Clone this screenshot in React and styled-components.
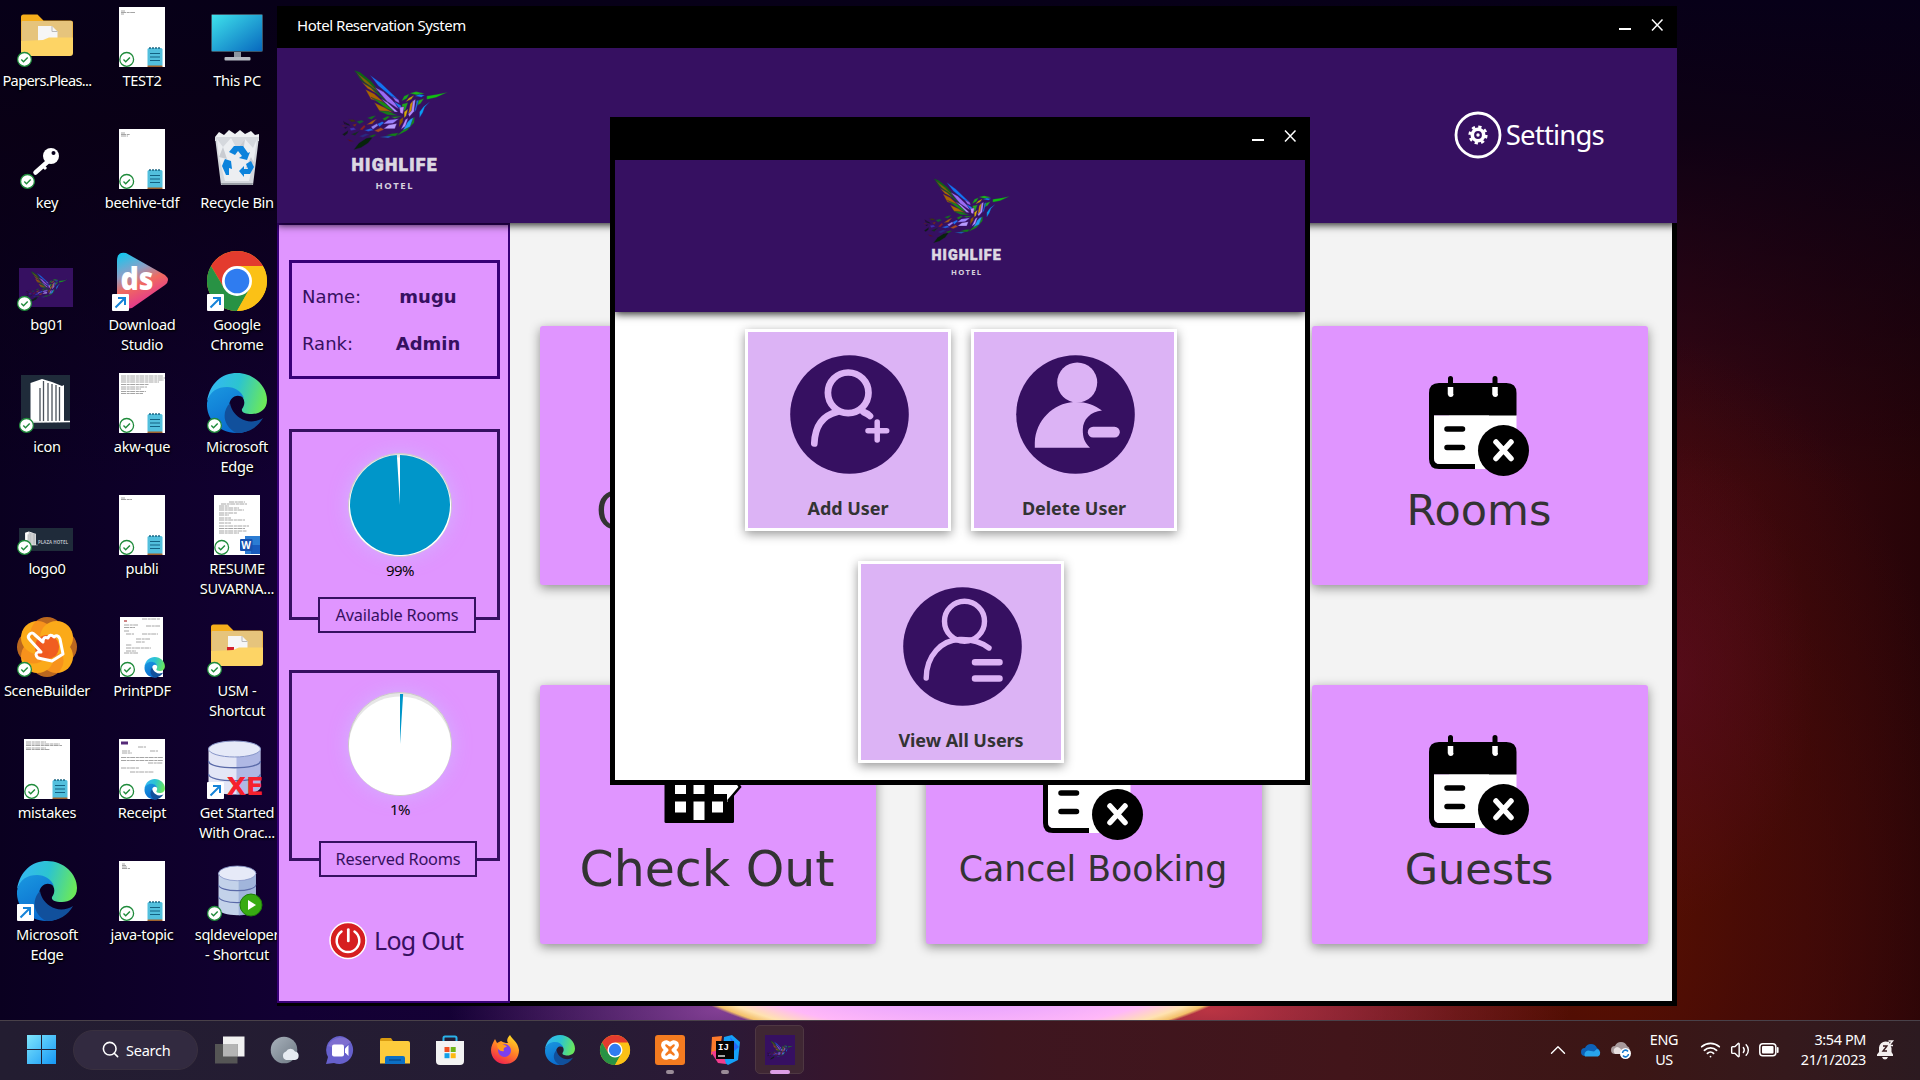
import React from "react";
import styled, { createGlobalStyle, css } from "styled-components";
import { Search, Wifi, Volume2, ChevronUp } from "lucide-react";

const UI = `"Noto Sans", "Open Sans", sans-serif`;
const VERDANA = `"DejaVu Sans", Verdana, sans-serif`;
const PURPLE = "#361061";
const PINK = "#e095ff";

const GlobalStyle = createGlobalStyle`
  * { box-sizing: border-box; }
  html, body { margin: 0; padding: 0; background: #06001a; overflow: hidden; }
  svg { display: block; overflow: visible; flex: none; }
`;

/* ---------- desktop ---------- */

const Desktop = styled.div`
  position: relative;
  width: 1920px;
  height: 1080px;
  overflow: hidden;
  display: flex;
  flex-direction: column;
  justify-content: space-between;
  font-family: ${UI};
  color: #fff;
  background:
    radial-gradient(ellipse 316px 115px at 961px 935px, #ffd9ff 0, #e8a4ff 60%, #ffb8f8 84%, #ffe2b0 94%, #f3c069 98.5%, transparent 100.5%),
    radial-gradient(ellipse 270px 100px at 720px 1010px, rgba(166, 84, 180, 0.75), transparent),
    radial-gradient(ellipse 360px 110px at 1210px 1010px, rgba(210, 60, 70, 0.85), transparent),
    radial-gradient(ellipse 150px 240px at 1665px 680px, rgba(100, 12, 44, 0.5), transparent),
    radial-gradient(ellipse 380px 600px at 1600px 920px, #5a1000 0, rgba(74, 12, 4, 0.85) 40%, transparent),
    linear-gradient(to bottom, #070018 0, rgba(9, 0, 20, 0.9) 12%, transparent 45%),
    linear-gradient(to right, #0a0020 0, #120033 15%, #180238 35%, #3a0a30 70%, #3f0812 88%, #270408 100%);
`;

const IconGrid = styled.div`
  display: grid;
  grid-template-columns: repeat(3, 95px);
  grid-auto-rows: 122px;
  width: 285px;
  padding-top: 7px;
`;

const Shortcut = styled.div`
  display: flex;
  flex-direction: column;
  align-items: center;
  gap: 3px;
  width: 94px;
`;

const ShortcutLabel = styled.span`
  font-size: 14.6px;
  line-height: 20px;
  letter-spacing: ${(p) => p.$track || "-0.3px"};
  text-align: center;
  white-space: pre;
  text-shadow: 0 1px 2px #000, 1px 1px 2px #000;
`;

const Check = ({ x = 7.5, y = 52.4 }) => (
  <g>
    <circle cx={x} cy={y} r="6.9" fill="#fff" stroke="#1f8b3b" strokeWidth="1.3" />
    <path d={`M${x - 3.2} ${y + 0.2} l2.2 2.2 l4.2 -4.4`} fill="none" stroke="#1f8b3b" strokeWidth="1.4" />
  </g>
);

const Arrow = () => (
  <g>
    <rect x="0" y="43" width="17" height="17" rx="1" fill="#fff" />
    <path d="M3.5 56.5 L12.5 47.5 M6 47 H13 V54" fill="none" stroke="#1583d8" strokeWidth="2" />
  </g>
);

const Notepad = () => (
  <g>
    <rect x="35.5" y="41" width="15" height="18" rx="1.5" fill="#52bfdd" />
    <path d="M38 40v2M41 40v2M44 40v2M47 40v2" stroke="#14607e" strokeWidth="1.4" />
    <path d="M38 46.5h10M38 50h10M38 53.5h10" stroke="#136182" strokeWidth="1.2" />
    <rect x="35.5" y="58.5" width="15" height="1.5" fill="#a0622c" />
  </g>
);

const EdgeShape = ({ id }) => (
  <g>
    <defs>
      <linearGradient id={`${id}a`} x1="0" y1="0.3" x2="1" y2="0.5">
        <stop offset="0" stopColor="#35b7f6" />
        <stop offset="0.5" stopColor="#2cc4d0" />
        <stop offset="1" stopColor="#6be85a" />
      </linearGradient>
      <linearGradient id={`${id}b`} x1="0" y1="0" x2="0.5" y2="1">
        <stop offset="0" stopColor="#1a98e0" />
        <stop offset="1" stopColor="#0a6ccf" />
      </linearGradient>
    </defs>
    <path d="M0 28 C3 10 15 0 30 0 C47 0 60 13 60 27 C60 37 52 41 45 41 C38 41 34 39 35 36 C39 31 38 24 31 20 C22 12 7 15 0 28Z" fill={`url(#${id}a)`} />
    <path d="M0 30 C2 18 11 14 20 14 C28 14 34 18 37 25 C30 20 22 24 22 34 C22 47 32 55 42 57 C37 60 32 60 29 60 C12 60 -1 46 0 30Z" fill={`url(#${id}b)`} />
    <path d="M23 30 C15 38 15 52 29 60 C42 60 51 54 56 45 C50 49 40 50 33 45 C27 41 24 36 23 30Z" fill="#11509c" />
  </g>
);

const ChromeShape = () => (
  <g>
    <circle cx="30" cy="30" r="30" fill="#fbc116" />
    <path d="M30 30 L56 15 A30 30 0 0 0 4 15 L17 37Z" fill="#e33b2e" />
    <path d="M4 15 A30 30 0 0 0 30 60 L43 37 L30 30 L17 37Z" fill="#289244" />
    <path d="M30 15 H56 A30 30 0 0 1 30 60 L43 37Z" fill="#fbc116" />
    <circle cx="30" cy="30" r="15" fill="#fff" />
    <circle cx="30" cy="30" r="12.3" fill="#2f7cf0" />
  </g>
);

const FEATHERS = [
  ["250,208 268,214 300,240 338,285 300,258 270,238", "#0b6b10"],
  ["256,214 290,240 325,275 280,243", "#7a6a00"],
  ["297,222 330,246 384,296 376,298 322,254", "#1274f2"],
  ["268,240 300,256 345,296 362,312 312,274", "#0f7a10"],
  ["272,243 300,260 318,278 290,262", "#b06a00"],
  ["312,258 338,272 374,306 384,324 348,300", "#9a6cf4"],
  ["283,264 310,278 345,308 300,294", "#a86400"],
  ["300,288 340,304 380,334 350,324", "#178a12"],
  ["330,292 350,304 382,332 372,332", "#b38cff"],
  ["310,304 340,318 368,334 326,330", "#a86a00"],
  ["322,328 352,330 382,342 350,341", "#157d18"],
  ["364,286 384,296 386,306 374,300", "#9a6cf4"],
  ["368,300 390,312 400,330 386,322", "#1b7cf2"],
  ["392,300 400,284 416,278 408,292", "#18a818"],
  ["404,302 414,290 430,282 422,294", "#c9a000"],
  ["416,276 436,271 462,277 440,282", "#18b818"],
  ["432,284 446,279 462,282 452,288", "#1280f0"],
  ["468,284 500,279 531,273 496,289 468,295", "#10c010"],
  ["478,301 458,316 446,332 446,350 456,334 462,318", "#0a9cf4"],
  ["434,300 460,292 450,306 438,314", "#22aa22"],
  ["424,300 434,294 430,330 416,346 412,338", "#b08cff"],
  ["418,308 427,298 422,328 413,338", "#d09000"],
  ["438,298 444,296 436,326 430,334", "#1474f0"],
  ["394,308 412,304 404,326 392,330", "#1fa81c"],
  ["386,318 400,316 396,338 388,334", "#c08cff"],
  ["400,332 412,322 406,344 400,350", "#d8b000"],
  ["432,346 430,364 408,388 376,404 398,384 412,362", "#158c18"],
  ["410,362 420,352 428,348 418,376 396,386", "#22a0f4"],
  ["404,354 412,350 404,374 390,384", "#b38cff"],
  ["386,356 398,346 396,362 384,378", "#8a5800"],
  ["360,346 394,344 372,352", "#208820"],
  ["336,368 352,356 384,352 366,366", "#9a80ff"],
  ["338,382 354,370 378,366 372,382", "#b89cff"],
  ["334,352 350,344 358,346 342,358", "#168218"],
  ["318,368 334,360 340,364 326,376", "#2070f0"],
  ["300,376 318,366 322,372 306,384", "#9080f0"],
  ["288,350 304,344 316,342 302,354", "#137020"],
  ["286,370 304,358 318,352 304,368", "#a85a10"],
  ["310,388 330,378 340,384 322,392", "#a84a20"],
  ["266,384 280,370 284,376 274,386", "#8a2020"],
  ["280,386 300,380 308,386 292,390", "#2060e0"],
  ["232,354 248,354 256,360 242,362", "#3a3410"],
  ["256,360 272,356 280,360 266,368", "#136030"],
  ["216,358 224,364 228,370 220,368", "#180c14"],
  ["210,372 226,372 218,376", "#602020"],
  ["220,362 234,368 238,374 226,370", "#101a18"],
  ["218,378 230,376 224,382", "#181020"],
  ["244,370 258,366 252,376", "#7a3010"],
  ["236,380 248,378 256,384 240,388", "#4030b0"],
  ["214,398 232,386 230,396 220,403", "#101c18"],
  ["240,398 256,392 266,388 252,402", "#12301c"],
  ["228,412 240,416 250,420 236,419", "#601010"],
  ["264,404 284,396 296,398 276,408", "#2a2a80"],
  ["248,444 264,424 286,410 306,406 292,424 270,438", "#06240a"],
  ["326,406 344,404 370,402 352,409", "#1870c0"],
  ["344,402 364,396 384,394 374,404", "#128018"],
  ["292,404 310,398 318,400 304,408", "#16601a"],
];

const Bird = (props) => (
  <svg viewBox="210 207 322 238" {...props}>
    {FEATHERS.map(([points, fill], i) => (
      <polygon key={i} points={points} fill={fill} stroke={PURPLE} strokeWidth="1.4" strokeOpacity="0.8" />
    ))}
  </svg>
);

const NestedBird = ({ x, y, width, height }) => (
  <Bird x={x} y={y} width={width} height={height} opacity="0.8" />
);

const Folder = ({ red }) => (
  <g>
    <path d="M4 10 q0 -2.5 2.5 -2.5 h14 l6 6 h27 q2.500 0 2.500 2.500 v30 h-52Z" fill="#f6ae1c" />
    <rect x="4.500" y="14" width="51" height="30" rx="1" fill="#e6c47c" />
    <path d="M21 34 V19 h14 l5.500 5.500 V34Z" fill="#f6f6f6" />
    <path d="M35 19 v5.500 h5.500" fill="none" stroke="#b9b9b9" />
    {red && <rect x="20" y="30" width="7" height="4" fill="#d21f2b" />}
    <path d="M4 34 L26 33 L32 30.500 H56 V46 q0 3 -3 3 H7 q-3 0 -3 -3Z" fill="#fdd465" />
  </g>
);

const Doc = ({ lines = [], badge = "note", id, narrow }) => (
  <g>
    <rect x={narrow ? 8 : 7} y="0" width={narrow ? 43 : 46} height="60" fill="#fff" />
    {lines.map(([x, y, w], i) => (
      <path key={i} d={`M${x} ${y}h${w}`} stroke="#888" strokeWidth="1" strokeDasharray="5 0.7 3 0.5" opacity="0.75" />
    ))}
    {badge === "note" && <Notepad />}
    {badge === "edge" && (
      <g transform="translate(32.500,40) scale(0.34)">
        <EdgeShape id={id} />
      </g>
    )}
    <Check x={narrow ? 15.5 : 14.7} />
  </g>
);

const Tower = ({ transform }) => (
  <g transform={transform}>
    <path d="M6.500 7 L18 3 L28 6 L38 10 L40 9 V45 L46 45.500 H6.500Z" fill="#fff" />
    <path d="M16 12v35M19.500 5v42M24 7v40M28 8v39M32 9v38M35.500 11v36" stroke="#4b525b" strokeWidth="1.300" />
    <path d="M5 46 L46 45.500" stroke="#fff" strokeWidth="1.500" />
  </g>
);

const Cylinder = ({ c1, c2 }) => (
  <g>
    <path d="M0 8 V46 C0 56 52 56 52 46 V8Z" fill={c1} />
    <path d="M28 8 V54 C42 53 52 50 52 46 V8Z" fill={c2} opacity="0.6" />
    <path d="M0 20 C0 29 52 29 52 20 M0 33 C0 42 52 42 52 33" fill="none" stroke="#5a6aa8" strokeWidth="1.300" />
    <ellipse cx="26" cy="8" rx="26" ry="8" fill="#e6eaf8" stroke="#8795c8" />
  </g>
);

const ART = {
  folder: <g><Folder /><Check /></g>,
  folderRed: <g><Folder red /><Check /></g>,
  pc: (
    <g>
      <defs>
        <linearGradient id="pc" x1="0" y1="0" x2="1" y2="1">
          <stop offset="0" stopColor="#3fe3ec" />
          <stop offset="1" stopColor="#0767be" />
        </linearGradient>
      </defs>
      <rect x="4.500" y="7.500" width="51" height="37" rx="1" fill="url(#pc)" stroke="#3c5568" />
      <path d="M27 45h7v6h-7z" fill="#8d95a0" />
      <rect x="17.500" y="50" width="26" height="3.500" rx="1" fill="#b5bac3" />
    </g>
  ),
  key: (
    <g>
      <path d="M36 28 L18.500 43.500" stroke="#fff" strokeWidth="4.500" strokeLinecap="round" />
      <path d="M26 37 l3 3" stroke="#fff" strokeWidth="3" />
      <circle cx="34" cy="27" r="8" fill="#fff" />
      <circle cx="36.500" cy="24" r="2" fill="#08001c" />
      <Check x={10.5} />
    </g>
  ),
  bin: (
    <g>
      <path d="M8 8 L12 3 L17 6 L22 1 L28 5 L33 1 L38 5 L44 2 L48 6 L52 5 L52 12 H8Z" fill="#eef0f2" />
      <path d="M8 8 H52 L46 56 H14Z" fill="#d5d8dd" />
      <path d="M10 10 L16 18 L24 9 L30 20 L38 10 L46 19 L50 10 L47 30 L42 52 H18 L12 28Z" fill="#eceef1" />
      <path d="M16 18 L12 28 L20 30Z M30 20 L36 24 L38 10Z M44 28 L38 40 L47 34Z" fill="#c9ccd2" />
      <path d="M27 17h9l5 7 2-1-3 8-8-2 3-2-4-5-3 4-6-3Z M18 30l6 2 1 8-3-1v7h-3l-4-9 2-5Z M44 32l3 6-4 7h-6v3l-5-6 5-5v3h4l-2-5Z" fill="#0c83dc" />
      <path d="M14 54 H46 L45.500 56 H14.500Z" fill="#999da4" />
    </g>
  ),
  bg01: (
    <g>
      <rect x="2" y="17" width="54" height="39" fill={PURPLE} />
      <NestedBird x={8} y={20} width={43} height={31} />
      <Check />
    </g>
  ),
  ds: (
    <g>
      <defs>
        <linearGradient id="ds" x1="0.1" y1="0" x2="0.5" y2="1">
          <stop offset="0" stopColor="#12c8f0" />
          <stop offset="0.35" stopColor="#8aa0c8" />
          <stop offset="0.6" stopColor="#f06a60" />
          <stop offset="1" stopColor="#e22e96" />
        </linearGradient>
      </defs>
      <path d="M5 10 q0 -10 9 -8 L53 24 q6 5 0 10 L20 57 Q5 60 5 48Z" fill="url(#ds)" />
      <text x="8.5" y="39" fontSize="31" fontWeight="800" fontFamily="Open Sans, sans-serif" fill="#fff" textLength="33" lengthAdjust="spacingAndGlyphs">ds</text>
      <Arrow />
    </g>
  ),
  chrome: <g><ChromeShape /><Arrow /></g>,
  tower: (
    <g>
      <rect x="4" y="2" width="49" height="54" fill="#1f2b3a" />
      <Tower transform="translate(7,3)" />
      <Check x={9.5} />
    </g>
  ),
  edgeCheck: <g><EdgeShape id="e1" /><Check /></g>,
  edgeArrow: <g><EdgeShape id="e2" /><Arrow /></g>,
  plaza: (
    <g>
      <rect x="2" y="33" width="54" height="23" fill="#1f2b3a" />
      <Tower transform="translate(6,35.500) scale(0.320)" />
      <text x="21" y="49" fontSize="5.500" fontFamily="Open Sans, sans-serif" fontWeight="700" fill="#b4b9c0" textLength="30" lengthAdjust="spacingAndGlyphs">PLAZA HOTEL</text>
      <Check />
    </g>
  ),
  scene: (
    <g>
      {[0, 45, 90, 135, 180, 225, 270, 315].map((a) => (
        <circle key={a} cx={30 + 13.500 * Math.cos((a * Math.PI) / 180)} cy={30 + 13.500 * Math.sin((a * Math.PI) / 180)} r="16.500" fill={a % 90 ? "#fbaa19" : "#f68a1e"} opacity={a % 90 ? 1 : 0.75} />
      ))}
      <circle cx="30" cy="30" r="12" fill="#ee4a23" opacity="0.8" />
      <path d="M12 18 q3 -4 6 0 l8 7 q0 -6 5 -4 q2 -5 6 -1 q4 -3 6 2 l3 15 l-11 7 l-14 -3 q-4 -4 0 -6 h3 l-11 -12 q-3 -3 -1 -5Z" fill="none" stroke="#fff" strokeWidth="3" strokeLinejoin="round" />
      <Check />
    </g>
  ),
  xe: (
    <g>
      <g transform="translate(1.500,2)"><Cylinder c1="#e3e6f6" c2="#8c9ad8" /></g>
      <text x="19.500" y="56" fontSize="25" fontFamily="DejaVu Sans, sans-serif" fontWeight="700" fill="#f5212d" textLength="37" lengthAdjust="spacingAndGlyphs">XE</text>
      <Arrow />
    </g>
  ),
  sql: (
    <g>
      <g transform="translate(11.500,5) scale(0.72,0.920)"><Cylinder c1="#c3d2ea" c2="#8aa2d0" /></g>
      <circle cx="44" cy="44" r="11" fill="#37ab12" stroke="#1f7d0a" />
      <path d="M41 39 l8 5 l-8 5Z" fill="#fff" />
      <Check />
    </g>
  ),
  test2: <Doc lines={[[9, 4, 4], [9, 5.500, 14], [9, 7, 3]]} />,
  beehive: <Doc lines={[[9, 4, 4], [9, 5.500, 9], [9, 7, 7]]} />,
  akw: <Doc lines={[[9, 3, 42], [9, 5, 44], [9, 7, 43], [9, 9, 38], [9, 11.500, 28], [9, 14, 26], [9, 16, 20], [9, 18.500, 25], [9, 20.500, 22]]} />,
  publi: <Doc lines={[[9, 3, 4], [9, 4.500, 11]]} />,
  resume: (
    <g>
      <Doc badge="none" lines={[[22, 7, 16], [14, 9, 26], [12, 11, 10], [12, 13, 20], [12, 15, 25], [12, 18, 18], [12, 20, 10], [12, 23, 12], [12, 25, 26], [12, 28, 12], [12, 31, 30], [12, 33.500, 26], [12, 36, 28], [12, 38, 20]]} />
      <rect x="38" y="41" width="15" height="18" fill="#2b7cd3" />
      <rect x="44" y="50" width="9" height="9" fill="#185abd" />
      <rect x="33" y="44" width="12.500" height="12" rx="1" fill="#1751ae" />
      <text x="39.200" y="53.600" fontSize="10" fontWeight="700" textAnchor="middle" fontFamily="Open Sans, sans-serif" fill="#fff">W</text>
    </g>
  ),
  print: (
    <g>
      <Doc narrow badge="edge" id="e3" lines={[[12, 4, 3], [30, 2, 18], [12, 8, 14], [12, 10.500, 11], [12, 14, 5], [34, 9, 14], [30, 17, 16], [14, 17, 8], [24, 22, 14], [24, 25, 9], [14, 28, 6], [14, 31, 25], [14, 34, 10], [12, 36, 14]]} />
      <path d="M12 4h3" stroke="#c33" />
    </g>
  ),
  mistakes: <Doc lines={[[9, 3, 20], [9, 5, 34], [9, 6.500, 36], [9, 9, 20], [9, 10.500, 24]]} />,
  receipt: (
    <g>
      <Doc badge="edge" id="e4" lines={[[26, 8, 8], [10, 12, 8], [10, 14, 10], [38, 12, 8], [9, 18.500, 42], [9, 21.500, 42], [36, 24, 15], [9, 29, 18], [18, 33, 24]]} />
      <path d="M9 4h7" stroke="#552a78" strokeWidth="3" />
    </g>
  ),
  java: <Doc lines={[[10, 3, 3], [10, 4.500, 4], [10, 6, 5], [10, 7.500, 8]]} />,
};

const SHORTCUTS = [
  ["folder", "Papers.Pleas...", "-0.65px"], ["test2", "TEST2"], ["pc", "This PC"],
  ["key", "key"], ["beehive", "beehive-tdf"], ["bin", "Recycle Bin"],
  ["bg01", "bg01"], ["ds", "Download\nStudio"], ["chrome", "Google\nChrome"],
  ["tower", "icon"], ["akw", "akw-que"], ["edgeCheck", "Microsoft\nEdge"],
  ["plaza", "logo0"], ["publi", "publi"], ["resume", "RESUME\nSUVARNA..."],
  ["scene", "SceneBuilder"], ["print", "PrintPDF"], ["folderRed", "USM -\nShortcut"],
  ["mistakes", "mistakes"], ["receipt", "Receipt"], ["xe", "Get Started\nWith Orac..."],
  ["edgeArrow", "Microsoft\nEdge"], ["java", "java-topic"], ["sql", "sqldeveloper\n- Shortcut"],
];

/* ---------- windows ---------- */

const Window = styled.section`
  position: absolute;
  isolation: isolate;
  left: ${(p) => p.$x}px;
  top: ${(p) => p.$y}px;
  width: ${(p) => p.$w}px;
  height: ${(p) => p.$h}px;
  display: flex;
  flex-direction: column;
  background: #000;
`;

const TitleBar = styled.header`
  display: flex;
  align-items: center;
  flex: none;
  height: ${(p) => p.$h}px;
  padding: 0 13px 5px 20px;
  gap: 19px;
`;

const Title = styled.h1`
  margin: 0 auto 0 0;
  font-size: 15px;
  font-weight: 400;
  letter-spacing: -0.47px;
  line-height: 20px;
`;

const Banner = styled.div`
  position: relative;
  z-index: 1;
  flex: none;
  display: flex;
  background: ${PURPLE};
  box-shadow: 0 2px 8px rgba(0, 0, 0, 0.85);
  clip-path: inset(0 0 -14px 0);
  ${(p) =>
    p.$modal
      ? css`height: 152px; margin: 0 5px; padding: 18px 0 0 308px;`
      : css`height: 175px; padding: 22px 73px 0 64px; justify-content: space-between;`}
`;

const SettingsLink = styled.div`
  display: flex;
  align-items: center;
  height: 130px;
  gap: 4px;
  font-size: 27.500px;
  line-height: 40px;
  letter-spacing: -0.8px;
`;

const Body = styled.div`
  display: flex;
  align-items: flex-start;
  height: 777px;
`;

const Sidebar = styled.aside`
  width: 233px;
  height: 780px;
  border: 2px solid #380077;
  background: ${PINK};
  padding: 35px 8px 0 10px;
  display: flex;
  flex-direction: column;
  gap: 50px;
`;

const UserBox = styled.dl`
  flex: none;
  margin: 0;
  width: 211px;
  height: 119px;
  border: 3px solid #380077;
  padding: 10px 0 0 10px;
  display: grid;
  grid-template-columns: 75px 102px;
  grid-auto-rows: 47px;
  align-items: center;
  font-family: ${VERDANA};
  font-size: 18px;
  color: ${PURPLE};
`;

const Term = styled.dt``;
const Value = styled.dd`
  margin: 0;
  font-weight: 700;
  text-align: center;
`;

const StatBox = styled.div`
  position: relative;
  flex: none;
  width: 211px;
  height: 191px;
  border: 3px solid ${PURPLE};
  padding: ${(p) => p.$top}px 0 0 11px;
  display: flex;
  flex-direction: column;
  align-items: center;
  gap: 3px;
  color: #000;
  font-size: 15px;
  line-height: 20px;
  letter-spacing: -0.5px;
`;

const StatLabel = styled.div`
  position: absolute;
  left: ${(p) => p.$left}px;
  bottom: ${(p) => p.$bottom}px;
  width: 158px;
  height: 36px;
  border: 2px solid ${PURPLE};
  background: ${PINK};
  color: ${PURPLE};
  display: flex;
  align-items: center;
  justify-content: center;
  font-size: 16.300px;
  letter-spacing: -0.2px;
`;

const LogOut = styled.div`
  display: flex;
  align-items: center;
  gap: 7px;
  margin: 9px 0 0 40px;
  height: 40px;
  font-size: 25px;
  line-height: 40px;
  letter-spacing: -0.7px;
  color: ${PURPLE};
`;

const CardGrid = styled.main`
  width: 1162px;
  height: 778px;
  background: #f3f3f3;
  padding: 103px 25px 0 30px;
  display: grid;
  grid-template-columns: repeat(3, 336px);
  grid-auto-rows: 259px;
  column-gap: 50px;
  row-gap: 100px;
`;

const Card = styled.div`
  border-radius: 3px;
  background: ${PINK};
  box-shadow: 0 3px 11px rgba(0, 0, 0, 0.42);
  display: flex;
  flex-direction: column;
  align-items: center;
  padding: ${(p) => p.$pad}px 2px 0 0;
  font-family: ${VERDANA};
  font-size: ${(p) => p.$size}px;
  line-height: ${(p) => p.$line}px;
  color: #333;
  white-space: nowrap;
`;

const ModalBody = styled.div`
  margin: 0 5px;
  height: 468px;
  background: #fff;
  padding: 17px 0 0 16px;
  display: flex;
  flex-direction: column;
  gap: 30px;
`;

const TileRow = styled.div`
  display: flex;
  justify-content: center;
  gap: 20px;
  width: 660px;
`;

const Tile = styled.div`
  width: 206px;
  height: 202px;
  border: 3px solid #fff;
  background: #dcb3f5;
  box-shadow: 0 3px 10px rgba(0, 0, 0, 0.42);
  display: flex;
  flex-direction: column;
  align-items: center;
  justify-content: space-between;
  padding: 23px 0 8px 3px;
  font-size: 18px;
  line-height: 24px;
  font-weight: 700;
  letter-spacing: -0.05px;
  color: #333;
`;

const TileText = styled.span`
  margin-right: 3px;
`;

const Logo = ({ width, height }) => (
  <svg width={width} height={height} viewBox="0 0 107 120">
    <Bird x="0" y="0" width="107" height="80" preserveAspectRatio="none" />
    <text x="10.500" y="100.500" fontFamily="Roboto, sans-serif" fontWeight="900" fontSize="17.500" fill="#dcd8e2" stroke="#dcd8e2" strokeWidth="0.600" textLength="85" lengthAdjust="spacing">HIGHLIFE</text>
    <text x="34.500" y="118.500" fontFamily="Noto Sans, sans-serif" fontWeight="700" fontSize="9.500" fill="#d6d0de" textLength="37" lengthAdjust="spacing">HOTEL</text>
  </svg>
);

const Controls = () => (
  <svg width="46" height="14" viewBox="0 0 46 14">
    <path d="M1 11h12" stroke="#fff" strokeWidth="2" />
    <path d="M34 1.500l10.500 11M44.500 1.500l-10.500 11" stroke="#fff" strokeWidth="1.500" />
  </svg>
);

const PieSvg = styled.svg`
  filter: drop-shadow(0 0 9px rgba(205, 190, 255, 0.65));
`;

const Pie = ({ percent }) => {
  const a = (percent / 100) * Math.PI * 2;
  const x = 52 + 50 * Math.sin(a);
  const y = 52 - 50 * Math.cos(a);
  return (
    <PieSvg width="104" height="104" viewBox="0 0 104 104">
      <circle cx="52" cy="52" r="51.500" fill="#e6e6e6" stroke="#ccc9c9" />
      <ellipse cx="52" cy="53.800" rx="51" ry="49.300" fill="#fff" />
      <path d={`M52 52 V2 A50 50 0 ${percent > 50 ? 1 : 0} 1 ${x} ${y}Z`} fill="#0096c9" />
    </PieSvg>
  );
};

const Calendar = () => (
  <svg width="100" height="100" viewBox="0 0 100 100">
    <path d="M20 39 H87.500 V93 H20Z" fill="#fff" />
    <path d="M0 17 Q0 7 10 7 H77.500 Q87.500 7 87.500 17 V39.500 H5 V82 Q5 88 11 88 H46 V93 H10 Q0 93 0 83Z" fill="#000" />
    <path d="M5 39.500 H60 V88 H11 Q5 88 5 82Z" fill="#fff" />
    <path d="M21.500 2.500 V12 M66 2.500 V12" stroke="#000" strokeWidth="5" strokeLinecap="round" />
    <path d="M21.500 11 V18.500 M66 11 V18.500" stroke="#fff" strokeWidth="5.500" />
    <path d="M19 18 h5.500 q0 3 -2.700 3 t-2.800 -3Z M63.500 18 h5.500 q0 3 -2.700 3 t-2.800 -3Z" fill="#fff" />
    <path d="M18 53 H33.500 M18 71.500 H33.500" stroke="#000" strokeWidth="5.500" strokeLinecap="round" />
    <circle cx="74.500" cy="74.500" r="25.500" fill="#000" />
    <path d="M67 66 L82 82.500 M82 66 L67 82.500" stroke="#fff" strokeWidth="5.500" strokeLinecap="round" />
  </svg>
);

const Building = () => (
  <svg width="86" height="100" viewBox="0 0 86 100">
    <rect x="0.500" y="10" width="69.500" height="87" rx="1.500" fill="#000" />
    {[16, 36].map((y) => (
      <path key={y} d={`M11.500 ${y}h11v11h-11z M30 ${y}h11v11h-11z`} fill="#fff" />
    ))}
    <path d="M11 57h11v11h-11z M29.500 57h11v11h-11z M11 75.500h11v11h-11z M48 75.500h11v11h-11z M29.500 75.500h11v18.500h-11z" fill="#fff" />
    <path d="M50 55 H63 V42 L76 62 L63 76 V68 H50Z" fill="#fff" />
    <path d="M50 48 H63 V42 L76 61 L64 75" fill="none" stroke="#000" strokeWidth="2.500" />
  </svg>
);

const UserAdd = () => (
  <svg width="119" height="119" viewBox="0.500 0.500 119 119">
    <circle cx="60" cy="60" r="59.300" fill={PURPLE} />
    <g fill="none" stroke="#dcb3f5" strokeWidth="6.700" strokeLinecap="round">
      <circle cx="58.700" cy="38.300" r="20.300" />
      <path d="M24.800 89 C25.500 72 33 61 47.500 57.500" />
      <path d="M74 57.500 Q78 59 80.500 61.500" />
      <path d="M87.700 67.500v18M78.500 76.300h18.700" strokeWidth="5.500" />
    </g>
  </svg>
);

const UserRemove = () => (
  <svg width="119" height="119" viewBox="0.500 0.500 119 119">
    <circle cx="60" cy="60" r="59.300" fill={PURPLE} />
    <g fill="#dcb3f5">
      <circle cx="61.700" cy="28" r="20" />
      <path d="M19.300 93.300 V88 C20 66 38 48.500 58 47.500 C70 47 79 50.500 86.500 56 C75 57 67.500 65 67.300 75 C67.200 83 69 88 74.500 93.300Z" />
      <rect x="72.300" y="72.300" width="32" height="10.700" rx="5.300" />
    </g>
  </svg>
);

const UserList = () => (
  <svg width="119" height="119" viewBox="0.500 0.500 119 119">
    <circle cx="60" cy="60" r="59.300" fill={PURPLE} />
    <g fill="none" stroke="#dcb3f5" strokeWidth="5.400" strokeLinecap="round">
      <circle cx="62" cy="34.700" r="20" />
      <path d="M23.700 91.500 C24 69 39 53.500 57 53 C71 52.500 80 56.500 86.500 61.500" />
      <path d="M72.500 75.700H97M72.500 92H97" strokeWidth="6.500" />
    </g>
  </svg>
);

const Gear = () => (
  <svg width="48" height="48" viewBox="0 0 48 48">
    <circle cx="24" cy="24" r="22" fill="none" stroke="#fff" strokeWidth="2.800" />
    <circle cx="24" cy="24" r="5.700" fill="none" stroke="#fff" strokeWidth="3.600" />
    <circle cx="24" cy="24" r="8.300" fill="none" stroke="#fff" strokeWidth="2.600" strokeDasharray="3.260 3.260" />
    <circle cx="24" cy="24" r="1.700" fill="#fff" />
  </svg>
);

const Power = () => (
  <svg width="38" height="39" viewBox="0 0 38 39">
    <circle cx="19" cy="19.500" r="18" fill="#d61f20" stroke="#fff" strokeWidth="1.500" />
    <path d="M12.500 10.500 A11.300 11.300 0 1 0 25.500 10.500" fill="none" stroke="#fff" strokeWidth="2.500" strokeLinecap="round" />
    <path d="M19.300 8.500 V20" stroke="#fff" strokeWidth="2.700" strokeLinecap="round" />
  </svg>
);

/* ---------- taskbar ---------- */

const Taskbar = styled.footer`
  height: 60px;
  display: flex;
  align-items: center;
  justify-content: space-between;
  padding: 0 24px 2px 14px;
  border-top: 1px solid #494149;
  background: linear-gradient(to right, #231d31 0, #251c34 28%, #2c1936 38%, #35162e 43%, #3e1620 52%, #42151a 70%, #3b1615 85%, #35191c 93%, #2c1a20 100%);
`;

const TaskGroup = styled.div`
  display: flex;
  align-items: center;
`;

const TaskButton = styled.div`
  position: relative;
  width: 55px;
  height: 57px;
  display: flex;
  align-items: center;
  justify-content: center;
`;

const ActiveFrame = styled.div`
  width: 49px;
  height: 49px;
  border-radius: 5px;
  border: 1px solid #4e3742;
  background: #3f2733;
  display: flex;
  align-items: center;
  justify-content: center;
`;

const RunMark = styled.i`
  position: absolute;
  bottom: 4px;
  left: calc(50% - ${(p) => (p.$active ? 10 : 4)}px);
  width: ${(p) => (p.$active ? 20 : 8)}px;
  height: 4px;
  border-radius: 2px;
  background: ${(p) => (p.$active ? "#dd9de6" : "#9a8c98")};
`;

const SearchPill = styled.div`
  width: 125px;
  height: 40px;
  margin: 0 4px 0 4px;
  border-radius: 20px;
  background: #322a40;
  border: 1px solid #39303f;
  display: flex;
  align-items: center;
  gap: 6px;
  padding-left: 27px;
  font-size: 14.500px;
  letter-spacing: -0.25px;
`;

const TrayText = styled.div`
  font-size: 14.400px;
  line-height: 20px;
  letter-spacing: -0.35px;
  text-align: ${(p) => p.$align};
  width: ${(p) => p.$w}px;
  white-space: nowrap;
`;

const Tray = styled.div`
  display: flex;
  align-items: center;
  gap: 10px;
`;

const TrayStatus = styled.div`
  display: flex;
  align-items: center;
  gap: 9px;
  margin: 0 7px 0 3px;
`;

const I = ({ children }) => <svg width="30" height="30" viewBox="0 0 30 30">{children}</svg>;

const TASKS = [
  { art: <I><path d="M8 1.500h21.500v20H8z" fill="#f1f1f1" /><path d="M0 9h22.500v19.500H0z" fill="#555" /><path d="M8 9h14.500v12.500H8z" fill="#b4b4b4" /></I> },
  { art: <I><defs><linearGradient id="wx" x1="0" y1="0" x2="1" y2="1"><stop offset="0" stopColor="#a9b2bc" /><stop offset="1" stopColor="#6d7883" /></linearGradient></defs><circle cx="14" cy="15" r="13.300" fill="url(#wx)" /><path d="M16 25 a4.500 4.500 0 0 1 0 -8.500 a5 5 0 0 1 9 0 a4.300 4.300 0 0 1 0 8.500Z" fill="#e6ebf1" /></I> },
  { art: <I><path d="M15 1 A14 14 0 1 1 9 28 L1 29 L3 22 A14 14 0 0 1 15 1Z" fill="#6660cc" /><path d="M3 11 A14 14 0 0 1 26 7 L15 15Z" fill="#8d7ad2" opacity=".6" /><rect x="7" y="9.500" width="12" height="12" rx="2" fill="#fff" /><path d="M20 13.500l3.500-3.500v11L20 17.500Z" fill="#fff" /></I> },
  { art: <I><path d="M0 5q0-2 2-2h9l2 3h-13z" fill="#d89a10" /><path d="M0 6h28q2 0 2 2v20.500H0z" fill="#fdcb3c" /><path d="M5 29v-6q0-2 2-2h16q2 0 2 2v6z" fill="#0c6fc4" /><path d="M9 25h12" stroke="#064c92" strokeWidth="1.500" /></I> },
  { art: <I><path d="M8.500 7V3q0-1.500 1.500-1.500h10q1.500 0 1.500 1.500v4" fill="none" stroke="#2ab2ea" strokeWidth="2" /><path d="M1 6h28v20q0 4-4 4H5q-4 0-4-4z" fill="#f3f3f3" /><path d="M9.500 12h5v5h-5z" fill="#f15022" /><path d="M15.700 12h5v5h-5z" fill="#6fb516" /><path d="M9.500 18.200h5v5h-5z" fill="#12a0e8" /><path d="M15.700 18.200h5v5h-5z" fill="#fdb912" /></I> },
  { art: <I><defs><linearGradient id="fx" x1="0.800" y1="0" x2="0.300" y2="1"><stop offset="0" stopColor="#ffe226" /><stop offset="0.500" stopColor="#ff8226" /><stop offset="1" stopColor="#f0204e" /></linearGradient></defs><path d="M20 0 C22 4 28 7 29 15 C29 24 23 29 15 29 C7 29 1 23 1 15 C1 11 3 8 5 4 L7 8 L11 6 C15 8 16 8 18 8 C16 5 18 2 20 0Z" fill="url(#fx)" /><circle cx="14.500" cy="15.500" r="6.500" fill="#7b3ff0" /><path d="M7 9 C12 8 16 10 17 12 C14 12 13 14 14 16 C10 17 7 14 7 9Z" fill="#ff9a1e" /></I> },
  { art: <svg width="30" height="30" viewBox="0 0 60 60"><EdgeShape id="e5" /></svg> },
  { art: <svg width="30" height="30" viewBox="0 0 60 60"><ChromeShape /></svg> },
  { run: true, art: <I><rect width="30" height="30" rx="3" fill="#f47b20" /><path d="M8.500 8.500 q3 -3 6.500 1 q3.500 -4 6.500 -1 q1.500 3 -3 6.500 q4.500 3.500 3 6.500 q-3 3 -6.500 -1 q-3.500 4 -6.500 1 q-1.500 -3 3 -6.500 q-4.500 -3.500 -3 -6.500Z" fill="none" stroke="#fff" strokeWidth="4" strokeLinejoin="round" /></I> },
  { run: true, art: <I><path d="M2 2 L12 1 L10 14 L1 20Z" fill="#fd7a2c" /><path d="M14 2 L22 0 L30 7 L28 25 L18 30 L12 26Z" fill="#14a0f8" /><path d="M1 17 L8 28 L16 29 L12 14Z" fill="#f23c8d" /><path d="M20 2 L29 12 L24 16Z" fill="#2468f5" /><rect x="6" y="6" width="18" height="18" fill="#050505" /><text x="8" y="15" fontSize="9" fontWeight="700" fontFamily="Liberation Mono, monospace" fill="#fff">IJ</text><path d="M8 21h7" stroke="#fff" strokeWidth="1.300" /></I> },
];

const Cell = ({ art, name, track }) => (
  <Shortcut>
    <svg width="60" height="60" viewBox="0 0 60 60">{ART[art]}</svg>
    <ShortcutLabel $track={track}>{name}</ShortcutLabel>
  </Shortcut>
);

export default function App() {
  return (
    <Desktop>
      <GlobalStyle />
      <IconGrid>
        {SHORTCUTS.map(([art, name, track]) => (
          <Cell key={art} art={art} name={name} track={track} />
        ))}
      </IconGrid>

      <Window $x={277} $y={6} $w={1400} $h={1000}>
        <TitleBar $h={42}>
          <Title>Hotel Reservation System</Title>
          <Controls />
        </TitleBar>
        <Banner>
          <Logo width={107} height={120} />
          <SettingsLink>
            <Gear />
            <span>Settings</span>
          </SettingsLink>
        </Banner>
        <Body>
          <Sidebar>
            <UserBox>
              <Term>Name:</Term>
              <Value>mugu</Value>
              <Term>Rank:</Term>
              <Value>Admin</Value>
            </UserBox>
            <StatBox $top={21}>
              <Pie percent={99} />
              <span>99%</span>
              <StatLabel $left={26} $bottom={-16}>Available Rooms</StatLabel>
            </StatBox>
            <StatBox $top={19}>
              <Pie percent={1} />
              <span>1%</span>
              <StatLabel $left={27} $bottom={-19}>Reserved Rooms</StatLabel>
            </StatBox>
            <LogOut>
              <Power />
              <span>Log Out</span>
            </LogOut>
          </Sidebar>
          <CardGrid>
            <Card $pad={50} $size={51.5} $line={70}><Building /><span>Check In</span></Card>
            <Card $pad={50} $size={43} $line={66}><Calendar /></Card>
            <Card $pad={50} $size={43} $line={68}><Calendar /><span>Rooms</span></Card>
            <Card $pad={41} $size={49} $line={88}><Building /><span>Check Out</span></Card>
            <Card $pad={55} $size={34.7} $line={58}><Calendar /><span>Cancel Booking</span></Card>
            <Card $pad={50} $size={43} $line={68}><Calendar /><span>Guests</span></Card>
          </CardGrid>
        </Body>
      </Window>

      <Window $x={610} $y={117} $w={700} $h={668}>
        <TitleBar $h={43}>
          <Title />
          <Controls />
        </TitleBar>
        <Banner $modal>
          <Logo width={87} height={98} />
        </Banner>
        <ModalBody>
          <TileRow>
            <Tile><UserAdd /><TileText>Add User</TileText></Tile>
            <Tile><UserRemove /><TileText>Delete User</TileText></Tile>
          </TileRow>
          <TileRow>
            <Tile><UserList /><TileText>View All Users</TileText></Tile>
          </TileRow>
        </ModalBody>
      </Window>

      <Taskbar>
        <TaskGroup>
          <TaskButton>
            <svg width="29" height="29" viewBox="0 0 29 29">
              <defs>
                <linearGradient id="win" x1="0" y1="0" x2="1" y2="1">
                  <stop offset="0" stopColor="#7fe6fc" />
                  <stop offset="1" stopColor="#1597f5" />
                </linearGradient>
              </defs>
              <path d="M0 0h14v14H0zM15 0h14v14H15zM0 15h14v14H0zM15 15h14v14H15z" fill="url(#win)" />
            </svg>
          </TaskButton>
          <SearchPill>
            <Search size={19} strokeWidth={2} />
            <span>Search</span>
          </SearchPill>
          {TASKS.map((t, i) => (
            <TaskButton key={i}>
              {t.art}
              {t.run && <RunMark />}
            </TaskButton>
          ))}
          <TaskButton>
            <ActiveFrame>
              <I>
                <rect width="30" height="30" fill={PURPLE} />
                <NestedBird x={2} y={5} width={26} height={20} />
              </I>
            </ActiveFrame>
            <RunMark $active />
          </TaskButton>
        </TaskGroup>
        <Tray>
          <ChevronUp size={26} strokeWidth={1.3} />
          <svg width="20" height="14" viewBox="0 0 20 14">
            <path d="M4 13 a4 4 0 0 1 0 -8 a6.500 6.500 0 0 1 12 0 a4.300 4.300 0 0 1 0 8Z" fill="#0d62b8" />
            <path d="M4 13.500 a4 4 0 0 1 3 -6 l6 1 l3 -2.500 a4 4 0 0 1 1 7.500Z" fill="#28a4ec" />
          </svg>
          <svg width="20" height="18" viewBox="0 0 20 18">
            <path d="M4 13 a4 4 0 0 1 0 -8 a6.500 6.500 0 0 1 12 0 a4.300 4.300 0 0 1 0 8Z" fill="#a89a9c" />
            <path d="M4 13 a4 4 0 0 1 2 -7 q4 0 6 7Z" fill="#e8e0e0" />
            <circle cx="14.500" cy="12.500" r="5.500" fill="#fff" />
            <path d="M11.500 12 a3 3 0 0 1 5.500 -1.500 M17.500 13 a3 3 0 0 1 -5.500 1.500" fill="none" stroke="#1478cc" strokeWidth="1.500" />
          </svg>
          <TrayText $align="center" $w={46}>ENG<br />US</TrayText>
          <TrayStatus>
            <Wifi size={21} strokeWidth={2} />
            <Volume2 size={20} strokeWidth={1.7} />
            <svg width="20" height="14" viewBox="0 0 20 14">
              <rect x="0.800" y="0.800" width="16" height="12" rx="3" fill="none" stroke="#fff" strokeWidth="1.500" />
              <rect x="3" y="3" width="11.500" height="7.600" rx="1" fill="#fff" />
              <path d="M18.700 5v4" stroke="#fff" strokeWidth="1.800" strokeLinecap="round" />
            </svg>
          </TrayStatus>
          <TrayText $align="right" $w={70}>3:54 PM<br />21/1/2023</TrayText>
          <svg width="20" height="20" viewBox="0 0 20 20">
            <path d="M1 16 V14.500 L3 12 V7.500 A6.500 6.500 0 0 1 9.500 1.500 L13 2 L15.500 8 V12 L17 14.500 V16Z" fill="#f3eeee" />
            <path d="M6 17h6 q-1 2.500 -3 2.500 t-3 -2.500Z" fill="#f3eeee" />
            <path d="M7 6h4l-4 5h4" fill="none" stroke="#35191c" strokeWidth="1.400" />
            <path d="M12.500 1h4l-3.500 4.500h4" fill="none" stroke="#f3eeee" strokeWidth="1.500" />
          </svg>
        </Tray>
      </Taskbar>
    </Desktop>
  );
}
